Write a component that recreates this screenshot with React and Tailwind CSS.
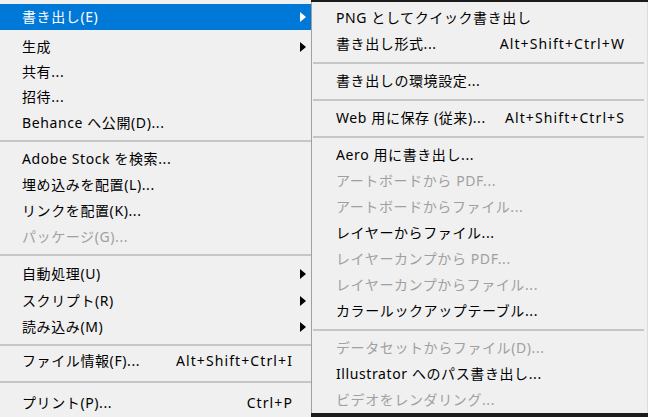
import React from "react";

const leftItems = [
    {label: "書き出し(E)", h: "h-[26px]", sub: true, active: true},
    {gap: "h-[4px]"},
    {label: "生成", h: "h-[25px]", sub: true},
    {label: "共有...", h: "h-[25px]"},
    {label: "招待...", h: "h-[26px]"},
    {label: "Behance へ公開(D)...", h: "h-[25px]"},
    {sep: "h-[11px]"},
    {label: "Adobe Stock を検索...", h: "h-[26px]"},
    {label: "埋め込みを配置(L)...", h: "h-[26px]"},
    {label: "リンクを配置(K)...", h: "h-[26px]"},
    {label: "パッケージ(G)...", h: "h-[26px]", disabled: true},
    {sep: "h-[10px]"},
    {label: "自動処理(U)", h: "h-[27px]", sub: true},
    {label: "スクリプト(R)", h: "h-[27px]", sub: true},
    {label: "読み込み(M)", h: "h-[26px]", sub: true},
    {sep: "h-[9px]"},
    {label: "ファイル情報(F)...", h: "h-[24px]", key: "Alt+Shift+Ctrl+I"},
    {sep: "h-[17px]"},
    {label: "プリント(P)...", h: "h-[26px]", key: "Ctrl+P"},
];

const rightItems = [
    {label: "PNG としてクイック書き出し"},
    {label: "書き出し形式...", key: "Alt+Shift+Ctrl+W"},
    {sep: true},
    {label: "書き出しの環境設定..."},
    {sep: true},
    {label: "Web 用に保存 (従来)...", key: "Alt+Shift+Ctrl+S"},
    {sep: true},
    {label: "Aero 用に書き出し..."},
    {label: "アートボードから PDF...", disabled: true},
    {label: "アートボードからファイル...", disabled: true},
    {label: "レイヤーからファイル..."},
    {label: "レイヤーカンプから PDF...", disabled: true},
    {label: "レイヤーカンプからファイル...", disabled: true},
    {label: "カラールックアップテーブル..."},
    {sep: true},
    {label: "データセットからファイル(D)...", disabled: true},
    {label: "Illustrator へのパス書き出し..."},
    {label: "ビデオをレンダリング...", disabled: true},
];

const Arrow = ({white}) => (
    <svg width="6" height="10" viewBox="0 0 6 10" className="absolute right-[5px] top-1/2 -translate-y-1/2">
        <path d="M0 0 L6 5 L0 10 Z" fill={white ? "#ffffff" : "#000000"}/>
    </svg>
);

const LeftRow = ({item}) => {
    if (item.gap) return <div className={item.gap}></div>;
    if (item.sep) {
        return (
            <div className={`${item.sep} flex items-center`}>
                <div className="w-full h-[2px] bg-[#c6c6c6]"></div>
            </div>
        );
    }
    const color = item.active ? "bg-[#0078d7] text-white" : item.disabled ? "text-[#a0a0a0]" : "text-black";
    return (
        <div className={`${item.h} ${color} relative flex items-center justify-between pl-[22px] pr-[18px]`}>
            <span>{item.label}</span>
            {item.key && <span className="tracking-[1.1px]">{item.key}</span>}
            {item.sub && <Arrow white={item.active}/>}
        </div>
    );
};

const RightRow = ({item}) => {
    if (item.sep) {
        return (
            <div className="h-[11px] flex items-center pl-[1px] pr-[3px]">
                <div className="w-full h-[2px] bg-[#c6c6c6]"></div>
            </div>
        );
    }
    return (
        <div className={`h-[26px] flex items-center justify-between pl-[24px] pr-[22px] ${item.disabled ? "text-[#a0a0a0]" : "text-black"}`}>
            <span>{item.label}</span>
            {item.key && <span className="tracking-[1.1px]">{item.key}</span>}
        </div>
    );
};

export default function App() {
    return (
        <div
            className="w-[648px] h-[417px] flex bg-[#1c1c1c] text-[14px] leading-none tracking-[0.6px] overflow-hidden"
            style={{fontFamily: '"Noto Sans", "Noto Sans CJK JP", sans-serif'}}
        >
            <div className="w-[311px] h-[417px] shrink-0 bg-[#f0f0f0] pt-[4px] flex flex-col">
                {leftItems.map((item, i) => <LeftRow key={i} item={item}/>)}
            </div>
            <div className="flex-1 pt-[2px] h-[413px] box-content">
                <div className="h-[411px] bg-[#f0f0f0] border-l border-[#a0a0a0] border-r border-r-[#dcdcdc] pt-[3px] flex flex-col">
                    {rightItems.map((item, i) => <RightRow key={i} item={item}/>)}
                </div>
            </div>
        </div>
    );
}
